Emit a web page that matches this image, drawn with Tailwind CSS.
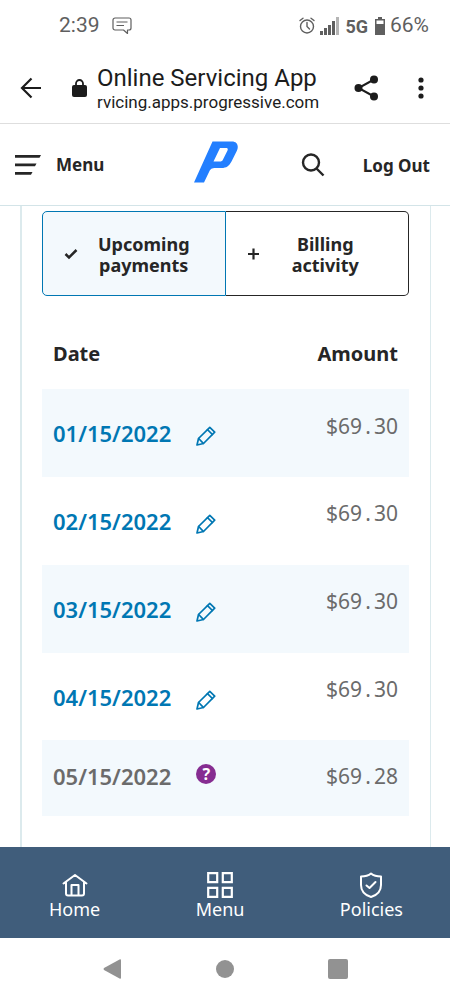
<!DOCTYPE html>
<html lang="en">
<head>
<meta charset="utf-8">
<meta name="viewport" content="width=device-width, initial-scale=1">
<title>Online Servicing App</title>
<script src="https://cdn.jsdelivr.net/npm/@tailwindcss/browser@4"></script>
</head>
<body class="flex min-h-screen flex-col bg-white font-['Noto_Sans',sans-serif] text-[#262626]">
<svg class="hidden" aria-hidden="true">
  <symbol id="pencil" viewBox="0 0 20 20">
    <g fill="none" stroke="currentColor" stroke-width="1.700" stroke-linejoin="round" stroke-linecap="round"><path d="M1 19l1.500-6.500L13.800 1.300L18.700 6.200L7.500 17.500z"/><path d="M2.700 12.500l4.600 4.800M11.500 3.600l4.900 4.900"/></g>
  </symbol>
</svg>

<div class="flex h-[52px] items-center justify-between pr-[21px] pl-[59px] font-[Roboto,sans-serif] text-[#5f5f5f]">
  <div class="flex items-center gap-3">
    <span class="text-[21px]">2:39</span>
    <svg class="h-[18px] w-5" viewBox="0 0 20 18" fill="none" stroke="currentColor" stroke-width="1.200" stroke-linejoin="round"><path d="M3 1h14a2 2 0 0 1 2 2v8a2 2 0 0 1-2 2h-1.500v3.500L11.500 13H3a2 2 0 0 1-2-2V3a2 2 0 0 1 2-2zM4.500 5h11M4.500 8.500H12"/></svg>
  </div>
  <div class="flex items-center gap-[5px]">
    <svg class="h-[18px] w-4" viewBox="0 0 16 18" fill="none" stroke="currentColor" stroke-width="1.400" stroke-linecap="round"><circle cx="8" cy="9.500" r="6.500"/><path d="M8 5.500v4l2.500 2.500M1 3.500L4 1.200M15 3.500l-3-2.300"/></svg>
    <svg class="h-[18px] w-5" viewBox="0 0 20 18" fill="currentColor"><path d="M0 14h3v4H0zM4 11h3v7H4zM8 8h3v10H8zM12 4h3v14h-3z"/><path fill="#b5b5b5" d="M16 0h3v18h-3z"/></svg>
    <span class="text-[18px] font-bold">5G</span>
    <svg class="ml-0.5 h-[18px] w-2.5" viewBox="0 0 10 18"><path fill="currentColor" d="M3 0h4v2h3v16H0V2h3z"/><path fill="#fff" d="M1.500 3.500h7V7h-7z"/></svg>
    <span class="text-[21px]">66%</span>
  </div>
</div>

<div class="flex h-[72px] items-center border-b border-[#dedede] pr-5 pl-5 font-[Roboto,sans-serif] text-[#1c1c1c]">
  <button type="button" aria-label="Back"><svg class="h-[22px] w-[22px]" viewBox="0 0 22 22" fill="none" stroke="currentColor" stroke-width="2.200"><path d="M21 11H2.500M11.500 1.500L2 11l9.500 9.500"/></svg></button>
  <svg class="ml-[30px] h-[18px] w-[15px] shrink-0" viewBox="0 0 15 18" fill="none"><rect y="6" width="15" height="12" rx="2" fill="currentColor"/><path d="M4 7V4.500a3.500 3.500 0 0 1 7 0V7" stroke="currentColor" stroke-width="1.800"/></svg>
  <div class="ml-2.5 min-w-0 flex-1">
    <div class="text-[24px] leading-7">Online Servicing App</div>
    <div class="text-[17px] leading-5">rvicing.apps.progressive.com</div>
  </div>
  <button type="button" aria-label="Share"><svg class="h-[26px] w-6" viewBox="0 0 24 26" fill="currentColor"><circle cx="20" cy="4.500" r="4"/><circle cx="4.500" cy="13" r="4"/><circle cx="20" cy="21.500" r="4"/><path d="M20 4.500L4.500 13 20 21.500" fill="none" stroke="currentColor" stroke-width="2"/></svg></button>
  <button type="button" aria-label="More options" class="ml-[34px]"><svg class="h-[22px] w-[18px]" viewBox="0 0 18 22" fill="currentColor"><circle cx="9" cy="3" r="2.600"/><circle cx="9" cy="11" r="2.600"/><circle cx="9" cy="19" r="2.600"/></svg></button>
</div>

<header class="flex h-[82px] items-center border-b border-[#d3e4e8] pr-5 pl-[15px]">
  <button type="button" class="flex flex-1 items-center gap-[15px] text-[17px] font-bold">
    <svg class="h-5 w-[26px]" viewBox="0 0 26 20" fill="currentColor"><path d="M0 0h26l-1.500 2.800H0zM0 8.500h21.500L20 11.300H0zM0 17h17.500L16 19.800H0z"/></svg>Menu
  </button>
  <a href="#" aria-label="Progressive" class="mr-3.5 mb-1.5"><svg class="h-[42px] w-11" viewBox="0 0 44 42"><path fill="#237fff" fill-rule="evenodd" d="M18.500 .5H38c5 0 7 4 5 9l-5.500 11c-2.500 4.500-5 6.500-10 6.500-8 0-10-.5-12 3L10 41.500H0zM26 7L19.500 20.500h6c2 0 3-.5 3.500-2l4.500-9c.7-1.700 0-2.500-1.500-2.500z"/></svg></a>
  <div class="flex flex-1 items-center justify-end gap-[38px]">
    <button type="button" aria-label="Search"><svg class="h-6 w-6" viewBox="0 0 24 24" fill="none" stroke="currentColor" stroke-width="2.400"><circle cx="10" cy="9.500" r="8"/><path d="M15.500 15.500l7 7"/></svg></button>
    <button type="button" class="pt-0.5 text-[17px] font-bold whitespace-nowrap">Log Out</button>
  </div>
</header>

<main class="mr-[19px] ml-5 flex-1 border-r border-l-2 border-[#dceaed] pt-[5px] pr-[21px] pl-5">
  <div class="grid grid-cols-2 text-[18px] leading-[21px] font-bold">
    <button type="button" aria-pressed="true" class="flex h-[85px] items-center rounded-l-[5px] border border-[#0077b3] bg-[#f3f9fd] pr-[26px] pl-[21px]">
      <svg class="h-3 w-[15px] shrink-0" viewBox="0 0 15 12" fill="none" stroke="currentColor" stroke-width="2.500"><path d="M1.500 6l3.500 3.500L12.500 2"/></svg>
      <span class="flex-1 pt-0.5 pl-2.5">Upcoming payments</span>
    </button>
    <button type="button" aria-pressed="false" class="flex h-[85px] items-center rounded-r-[5px] border-y border-r border-[#262626] pr-[18px] pl-5">
      <svg class="h-3 w-[15px] shrink-0" viewBox="0 0 15 12" fill="none" stroke="currentColor" stroke-width="2.200"><path d="M2 6h11M7.500 .5v11"/></svg>
      <span class="flex-1 px-5 pt-0.5">Billing activity</span>
    </button>
  </div>

  <table class="mt-[22px] w-full text-[#6b6b6b]">
    <thead class="text-[20px] text-[#262626]">
      <tr class="h-[71px]"><th scope="col" class="px-[11px] text-left">Date</th><th scope="col" class="px-[11px] text-right">Amount</th></tr>
    </thead>
    <tbody class="text-[21px] leading-7">
      <tr class="h-[88px] bg-[#f3f9fd]">
        <td class="pl-[11px]"><a href="#" class="flex items-center gap-[25px] text-[22px] font-semibold text-[#0077b3]">01/15/2022<svg class="mt-1.5 h-5 w-5"><use href="#pencil"/></svg></a></td>
        <td class="pt-[23px] pr-[11px] text-right align-top">$69<span class="inline-block w-3 text-center">.</span>30</td>
      </tr>
      <tr class="h-[88px]">
        <td class="pl-[11px]"><a href="#" class="flex items-center gap-[25px] text-[22px] font-semibold text-[#0077b3]">02/15/2022<svg class="mt-1.5 h-5 w-5"><use href="#pencil"/></svg></a></td>
        <td class="pt-[22px] pr-[11px] text-right align-top">$69<span class="inline-block w-3 text-center">.</span>30</td>
      </tr>
      <tr class="h-[88px] bg-[#f3f9fd]">
        <td class="pl-[11px]"><a href="#" class="flex items-center gap-[25px] text-[22px] font-semibold text-[#0077b3]">03/15/2022<svg class="mt-1.5 h-5 w-5"><use href="#pencil"/></svg></a></td>
        <td class="pt-[22px] pr-[11px] text-right align-top">$69<span class="inline-block w-3 text-center">.</span>30</td>
      </tr>
      <tr class="h-[87px]">
        <td class="pl-[11px]"><a href="#" class="flex items-center gap-[25px] text-[22px] font-semibold text-[#0077b3]">04/15/2022<svg class="mt-1.5 h-5 w-5"><use href="#pencil"/></svg></a></td>
        <td class="pt-[22px] pr-[11px] text-right align-top">$69<span class="inline-block w-3 text-center">.</span>30</td>
      </tr>
      <tr class="h-[76px] bg-[#f3f9fd]">
        <td class="pt-[22px] pl-[11px] align-top"><div class="flex items-center gap-[25px] text-[22px] font-semibold">05/15/2022<button type="button" aria-label="Help" class="mb-1 flex h-5 w-5 items-center justify-center rounded-full bg-[#862d91] text-[16px] font-bold text-white">?</button></div></td>
        <td class="pt-[22px] pr-[11px] text-right align-top">$69<span class="inline-block w-3 text-center">.</span>28</td>
      </tr>
    </tbody>
  </table>
</main>

<nav class="flex h-[91px] justify-between bg-[#405d7b] pt-[25px] pr-[47px] pl-[49px] text-[18px] leading-[22px] text-white">
  <a href="#" class="flex flex-col items-center"><svg class="h-[26px] w-[26px]" viewBox="0 0 26 26" fill="none" stroke="currentColor" stroke-width="2" stroke-linecap="round" stroke-linejoin="round"><path d="M1.500 11.500L13 3l11.500 8.500M4 10v11.500a2 2 0 0 0 2 2h14a2 2 0 0 0 2-2V10M9.500 23V13h7v10"/></svg>Home</a>
  <a href="#" class="flex flex-col items-center"><svg class="h-[26px] w-[26px]" viewBox="0 0 26 26" fill="none" stroke="currentColor" stroke-width="2.200"><path d="M1.200 1.200h9v9h-9zM15.800 1.200h9v9h-9zM1.200 15.800h9v9h-9zM15.800 15.800h9v9h-9z"/></svg>Menu</a>
  <a href="#" class="flex flex-col items-center"><svg class="h-[26px] w-[26px]" viewBox="0 0 26 26" fill="none" stroke="currentColor" stroke-width="2" stroke-linejoin="round"><path d="M13 1.500c3 2.500 6 3 10 3V13c0 6-3.500 10-10 12C6.500 23 3 19 3 13V4.500c4 0 7-.5 10-3z"/><path d="M8.500 13.500l3 2.500 6-6" stroke-linecap="round"/></svg>Policies</a>
</nav>

<div class="flex h-[62px] items-center justify-center gap-[94px] text-[#929292]">
  <button type="button" aria-label="Back"><svg class="h-5 w-5" viewBox="0 0 20 20" fill="currentColor"><path d="M2 9L18 .200q1-.2 1 1v17.600q0 1.200-1 1L2 11q-1-1 0-2z"/></svg></button>
  <button type="button" aria-label="Home" class="h-[18px] w-[18px] rounded-full bg-current"></button>
  <button type="button" aria-label="Recent apps" class="h-5 w-5 rounded-xs bg-current"></button>
</div>
</body>
</html>
